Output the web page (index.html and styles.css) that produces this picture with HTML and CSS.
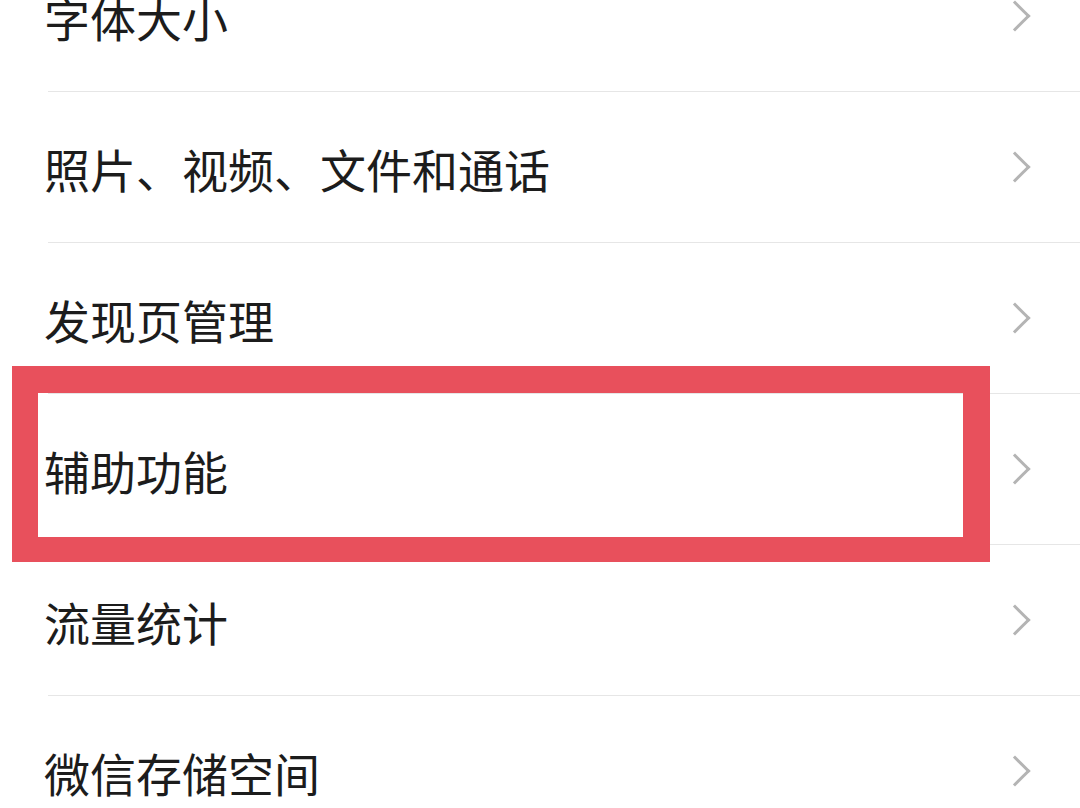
FILE: index.html
```html
<!DOCTYPE html>
<html lang="zh-CN">
<head>
    <meta charset="UTF-8">
    <meta name="viewport" content="width=device-width, initial-scale=1.0">
    <title>设置</title>
    <link rel="stylesheet" href="styles.css">
</head>
<body>
    <div class="list">
        <div class="row"><span class="label">字体大小</span><span class="arrow"></span></div>
        <div class="row"><span class="label">照片、视频、文件和通话</span><span class="arrow"></span></div>
        <div class="row"><span class="label">发现页管理</span><span class="arrow"></span></div>
        <div class="row marked"><span class="label">辅助功能</span><span class="arrow"></span><div class="highlight"></div></div>
        <div class="row"><span class="label">流量统计</span><span class="arrow"></span></div>
        <div class="row"><span class="label">微信存储空间</span><span class="arrow"></span></div>
    </div>
</body>
</html>
```

FILE: styles.css
```css
* {
    margin: 0;
    padding: 0;
    box-sizing: border-box;
}
body {
    background-color: #fff;
    font-family: "Noto Sans CJK SC", "Noto Sans", sans-serif;
    overflow: hidden;
}
.list {
    margin-top: -59px;
}
.row {
    height: 151px;
    margin-left: 48px;
    padding-right: 50px;
    display: flex;
    align-items: center;
    justify-content: space-between;
    border-bottom: 1px solid #e6e6e6;
}
.label {
    margin-left: -4px;
    font-size: 46px;
    color: #1c1c1c;
    padding-top: 2px;
}
.arrow {
    width: 22px;
    height: 22px;
    border-top: 3px solid #b4b4b4;
    border-right: 3px solid #b4b4b4;
    transform: rotate(45deg);
    margin-right: 4px;
}
.marked {
    position: relative;
}
.highlight {
    position: absolute;
    top: -28px;
    left: -36px;
    width: 978px;
    height: 196px;
    border-style: solid;
    border-color: #e8505c;
    border-width: 27px 27px 25px 26px;
}
```
